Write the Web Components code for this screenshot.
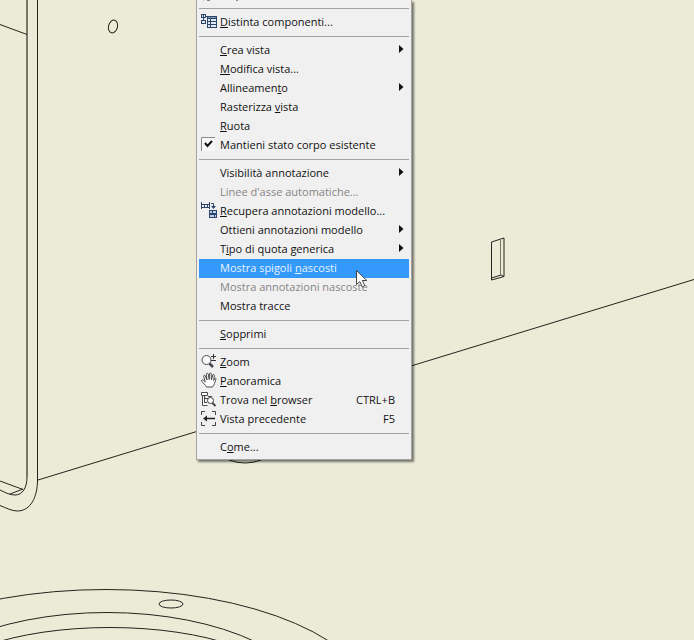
<!DOCTYPE html>
<html lang="it">
<head>
<meta charset="utf-8">
<title>Menu contestuale vista</title>
<style>
    body {
        margin: 0;
        min-height: 100vh;
        background: #ecebd8;
        font-family: "Open Sans", "Noto Sans", sans-serif;
        overflow: hidden;
    }
</style>
</head>
<body>
<drawing-sheet>
    <context-menu>
        <menu-clip></menu-clip>
        <menu-separator></menu-separator>
        <menu-entry icon="bom"><u>D</u>istinta componenti...</menu-entry>
        <menu-separator></menu-separator>
        <menu-entry submenu><u>C</u>rea vista</menu-entry>
        <menu-entry><u>M</u>odifica vista...</menu-entry>
        <menu-entry submenu>Allineamen<u>t</u>o</menu-entry>
        <menu-entry>Rasterizza <u>v</u>ista</menu-entry>
        <menu-entry><u>R</u>uota</menu-entry>
        <menu-entry icon="check">Mantieni stato corpo esistente</menu-entry>
        <menu-separator></menu-separator>
        <menu-entry submenu>Visibilità annotazione</menu-entry>
        <menu-entry disabled>Linee d'asse automatiche...</menu-entry>
        <menu-entry icon="retrieve"><u>R</u>ecupera annotazioni modello...</menu-entry>
        <menu-entry submenu>Ottieni annotazioni modello</menu-entry>
        <menu-entry submenu>T<u>i</u>po di quota generica</menu-entry>
        <menu-entry active>Mostra spigoli <u>n</u>ascosti</menu-entry>
        <menu-entry disabled>Mostra annotazioni nascoste</menu-entry>
        <menu-entry>Mostra tracce</menu-entry>
        <menu-separator></menu-separator>
        <menu-entry><u>S</u>opprimi</menu-entry>
        <menu-separator></menu-separator>
        <menu-entry icon="zoom"><u>Z</u>oom</menu-entry>
        <menu-entry icon="pan"><u>P</u>anoramica</menu-entry>
        <menu-entry icon="find" shortcut="CTRL+B">Trova nel <u>b</u>rowser</menu-entry>
        <menu-entry icon="previous" shortcut="F5">Vista precedente</menu-entry>
        <menu-separator></menu-separator>
        <menu-entry>C<u>o</u>me...</menu-entry>
    </context-menu>
    <mouse-pointer></mouse-pointer>
</drawing-sheet>

<script>
const ICONS = {
    bom: `
        <path fill="#2c4468" d="M0 1h5v4H0zM0 7h5v4H0zM5 3h2v1H5zM2 5h1v2H2zM6 3h10v12H6z"/>
        <path fill="#dfe8f2" d="M1 2h1v2H1zM3 2h1v2H3zM1 8h3v2H1zM7 6h2v2H7zM7 9h2v2H7zM7 12h2v2H7zM10 6h5v2h-5zM10 9h5v2h-5zM10 12h5v2h-5z"/>
        <path fill="#7893b3" d="M7 4h8v1H7z"/>`,
    check: `
        <path fill="#f8f8f8" d="M0 1h14v14H0z"/>
        <path fill="none" stroke="#8b8b8b" d="M.5 15V1.500H14"/>
        <path fill="none" stroke="#111" stroke-width="2" d="M4 7l2.500 3L11 5"/>`,
    retrieve: `
        <path fill="none" stroke="#2c4468" d="M.5 0v7M8.500 0v7M0 2.500h9M0 5.500h9M3.500 2v4M6.500 2v4"/>
        <path fill="none" stroke="#2c4468" d="M10 1.500h2.500V5"/>
        <path fill="#2c4468" d="M10 4h5l-2.500 3zM8 8h8v8H8z"/>
        <path fill="#b9d2ee" d="M9 9h6v2H9zM9 13h6v2H9z"/>
        <path stroke="#2c4468" d="M11.500 9v2M13.500 13v2"/>`,
    zoom: `
        <circle cx="5.500" cy="7" r="4.500" fill="#f8f8f8" stroke="#4b4b4b"/>
        <path stroke="#3f4650" stroke-width="2.500" d="M8.500 10.500l3.500 3.500"/>
        <path stroke="#333" d="M12.500 1v5M10 3.500h5M10 7.500h5"/>`,
    pan: `
        <path fill="#fff" stroke="#4a4a4a" d="M5.500 15C4.500 13 2.500 11.500.7 9.200c-.6-1 .7-1.800 1.600-1l2 1.700L2.700 4.500c-.3-1.300 1.200-1.700 1.700-.5L6 8 5.400 2.300c0-1.300 1.600-1.400 1.900-.1l.9 5.300.2-5.800c.2-1.100 1.700-1 1.800.1L10.400 8l1.400-5c.4-1 1.700-.7 1.600.5l-.8 5 1-2c.6-.9 1.700-.3 1.300.8-1.200 3-1.300 5.400-3.500 7.700z"/>`,
    find: `
        <path fill="#fff" stroke="#4a4a4a" d="M.5 1.500h6v3h-6zM1.500 4.500v10h5M3.500 5v7M4 7.500h3M4 11.500h2"/>
        <path stroke="#4a4a4a" d="M7 5.500h4"/>
        <circle cx="9.500" cy="9.500" r="3" fill="#fff" stroke="#404040"/>
        <path stroke="#404040" stroke-width="2" d="M11.500 12l3 3"/>`,
    previous: `
        <path fill="none" stroke="#444" d="M.5 5V1.500H4M11 1.500h3.500V5M14.500 12v3.500H11M4 15.500H.5V12"/>
        <path stroke="#222" stroke-width="1.500" d="M4 8.500h10"/>
        <path fill="#222" d="M2 8.500L6 5.500v6z"/>`
};

// base: every element clones its markup into an open shadow root
class SheetElement extends HTMLElement {
    constructor() {
        super();
        this.attachShadow({ mode: 'open' });
    }

    connectedCallback() {
        const template = document.createElement('template');
        template.innerHTML = `<style>${this.getStyles()}</style>${this.getTemplate()}`;
        this.shadowRoot.replaceChildren(template.content.cloneNode(true));
    }
}

class DrawingSheet extends SheetElement {
    getStyles() {
        return `
        :host {
            display: block;
            position: relative;
            width: 100%;
            height: 100vh;
            overflow: hidden;
        }

        .lines {
            display: block;
            width: 100%;
            height: 100%;
            fill: none;
            stroke: #24231d;
        }

        .soft { stroke: #77766a; }

        ::slotted(context-menu) {
            position: absolute;
            top: 0;
            left: 196px;
        }

        ::slotted(mouse-pointer) {
            position: absolute;
            top: 269px;
            left: 355px;
        }
        `;
    }

    getTemplate() {
        return `
        <svg class="lines" viewBox="0 0 694 640" preserveAspectRatio="xMinYMin slice" aria-hidden="true">
            <path class="soft" stroke-width="2" d="M27 0v477"/>
            <path d="M37.500 0v480"/>
            <path d="M0 24.500L27 34.500M0 481l23 8.500M38 480L694 279.500"/>
            <path d="M27 477c0 10-4 18-12 18-5 0-9-2-15-5M10 494l13-5M37.500 480c0 17-7 31-20 31-6 0-11-3-17.500-5.500"/>
            <ellipse cx="113" cy="26.500" rx="4.500" ry="6.500" transform="rotate(14 113 26.500)"/>
            <path d="M491.500 242l12.500-4v38.500l-12.500 3.500zM491.500 278l9.500-3 3 1.500"/>
            <path class="soft" d="M500.500 239v36"/>
            <path d="M229 460q16 6 32 0"/>
            <ellipse cx="106" cy="705.500" rx="268" ry="116"/>
            <ellipse cx="107" cy="712.500" rx="210" ry="100"/>
            <ellipse cx="110" cy="689.500" rx="175" ry="62"/>
            <ellipse cx="171" cy="604" rx="12" ry="4"/>
        </svg>
        <slot></slot>`;
    }
}

class ContextMenu extends SheetElement {
    connectedCallback() {
        super.connectedCallback();
        this.setAttribute('role', 'menu');
    }

    getStyles() {
        return `
        :host {
            display: flex;
            flex-direction: column;
            box-sizing: border-box;
            width: 216px;
            padding: 0 2px 2px;
            border: 1px solid #a3a3a0;
            border-top: 0;
            background: #f0f0f0;
            box-shadow: 2px 2px 2px rgba(0, 0, 0, .5);
        }
        `;
    }

    getTemplate() {
        return `<slot></slot>`;
    }
}

// tail of the entry that scrolls out over the top edge
class MenuClip extends SheetElement {
    getStyles() {
        return `
        :host { display: block; height: 4px; }
        svg { display: block; }
        `;
    }

    getTemplate() {
        return `
        <svg width="60" height="4" fill="none" stroke="#555" aria-hidden="true">
            <path d="M4 0l2-1M8 0q1 1 3 0M37 0q2 1 3-1"/>
        </svg>`;
    }
}

class MenuSeparator extends SheetElement {
    getStyles() {
        return `
        :host { display: block; padding: 4px 0; }
        hr { margin: 0; border: 0; border-top: 1px solid #a2a2a2; }
        `;
    }

    getTemplate() {
        return `<hr>`;
    }
}

class MenuEntry extends SheetElement {
    getStyles() {
        return `
        :host { display: block; }

        button {
            display: grid;
            grid-template-columns: 15px 1fr auto 10px;
            column-gap: 4px;
            align-items: start;
            width: 100%;
            height: 19px;
            margin: 0;
            padding: 0 0 0 2px;
            border: 0;
            background: none;
            color: #111;
            font: 11px/17px "Open Sans", "Noto Sans", sans-serif;
            text-align: left;
            white-space: nowrap;
        }

        svg { display: block; }
        .icon svg { width: 16px; height: 17px; }
        .arrow { height: 17px; fill: #111; }
        ::slotted(u) { text-underline-offset: 1px; }

        :host([disabled]) button { color: #858585; }
        :host([active]) button { background: #3399fb; color: #e8f4ff; }
        `;
    }

    getTemplate() {
        const icon = ICONS[this.getAttribute('icon')];
        const arrow = `<svg class="arrow" width="10" viewBox="0 0 10 17" aria-hidden="true"><path d="M0 4l4.500 4-4.500 4z"/></svg>`;
        return `
        <button type="button" role="menuitem" ${this.hasAttribute('disabled') ? 'disabled' : ''}>
            <span class="icon">${icon ? `<svg viewBox="0 0 16 17" aria-hidden="true">${icon}</svg>` : ''}</span>
            <span><slot></slot></span>
            <span>${this.getAttribute('shortcut') || ''}</span>
            <span>${this.hasAttribute('submenu') ? arrow : ''}</span>
        </button>`;
    }
}

class MousePointer extends SheetElement {
    getStyles() {
        return `
        :host { display: block; pointer-events: none; }
        svg { display: block; }
        `;
    }

    getTemplate() {
        return `
        <svg width="14" height="20" aria-hidden="true">
            <path fill="#fff" stroke="#444" d="M1.500 1.500v14l3.300-3 2.500 5.500 2.500-1.200-2.500-5.300h4.500z"/>
        </svg>`;
    }
}

customElements.define('drawing-sheet', DrawingSheet);
customElements.define('context-menu', ContextMenu);
customElements.define('menu-clip', MenuClip);
customElements.define('menu-separator', MenuSeparator);
customElements.define('menu-entry', MenuEntry);
customElements.define('mouse-pointer', MousePointer);
</script>
</body>
</html>
